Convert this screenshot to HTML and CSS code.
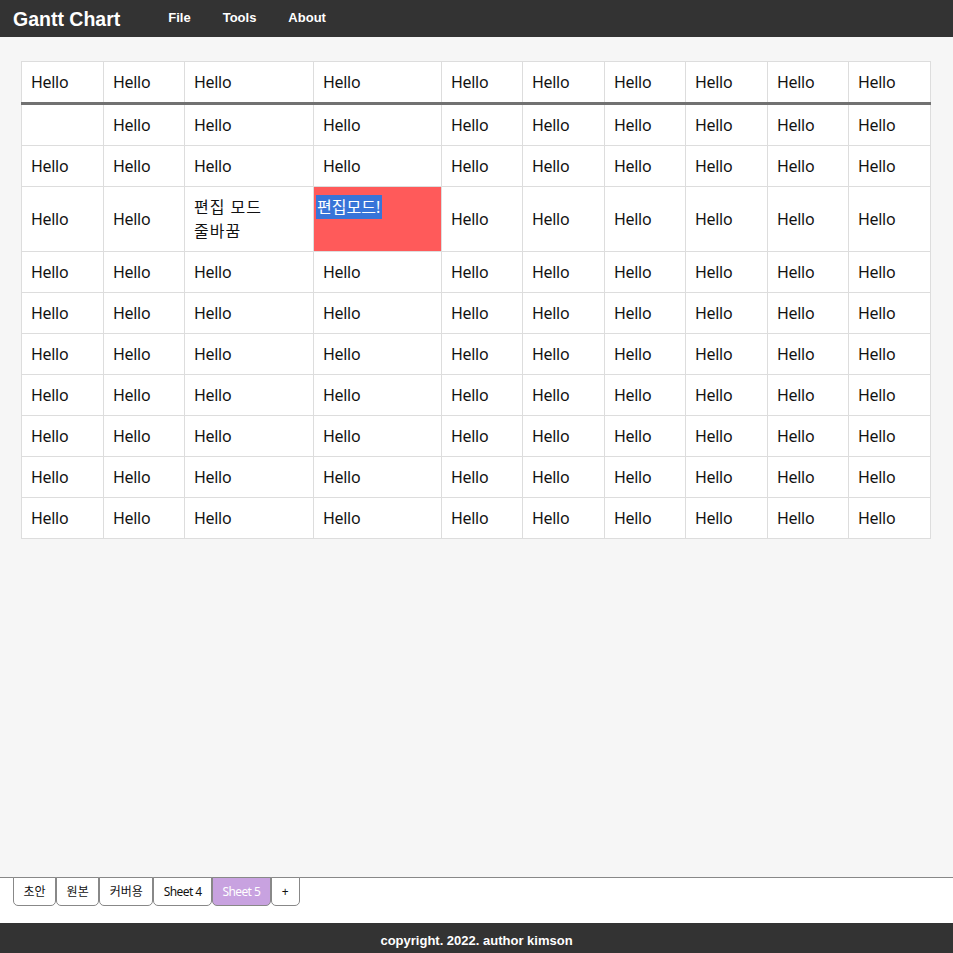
FILE: index.html
```html
<!DOCTYPE html>
<html lang="ko">
<head>
<meta charset="utf-8">
<title>Gantt Chart</title>
<link rel="stylesheet" href="styles.css">
</head>
<body>
<header class="topbar">
  <div class="brand">Gantt Chart</div>
  <nav class="menu">
    <span class="menu-item">File</span>
    <span class="menu-item">Tools</span>
    <span class="menu-item">About</span>
  </nav>
</header>
<main class="content">
  <table class="sheet">
    <colgroup>
      <col class="c82"><col class="c81"><col class="c129"><col class="c128"><col class="c81">
      <col class="c82"><col class="c81"><col class="c82"><col class="c81"><col class="c82">
    </colgroup>
    <thead>
      <tr><th>Hello</th><th>Hello</th><th>Hello</th><th>Hello</th><th>Hello</th><th>Hello</th><th>Hello</th><th>Hello</th><th>Hello</th><th>Hello</th></tr>
    </thead>
    <tbody>
      <tr><td></td><td>Hello</td><td>Hello</td><td>Hello</td><td>Hello</td><td>Hello</td><td>Hello</td><td>Hello</td><td>Hello</td><td>Hello</td></tr>
      <tr><td>Hello</td><td>Hello</td><td>Hello</td><td>Hello</td><td>Hello</td><td>Hello</td><td>Hello</td><td>Hello</td><td>Hello</td><td>Hello</td></tr>
      <tr><td>Hello</td><td>Hello</td><td class="ko">편집 모드<br>줄바꿈</td><td class="editing"><span class="selected">편집모드!</span></td><td>Hello</td><td>Hello</td><td>Hello</td><td>Hello</td><td>Hello</td><td>Hello</td></tr>
      <tr><td>Hello</td><td>Hello</td><td>Hello</td><td>Hello</td><td>Hello</td><td>Hello</td><td>Hello</td><td>Hello</td><td>Hello</td><td>Hello</td></tr>
      <tr><td>Hello</td><td>Hello</td><td>Hello</td><td>Hello</td><td>Hello</td><td>Hello</td><td>Hello</td><td>Hello</td><td>Hello</td><td>Hello</td></tr>
      <tr><td>Hello</td><td>Hello</td><td>Hello</td><td>Hello</td><td>Hello</td><td>Hello</td><td>Hello</td><td>Hello</td><td>Hello</td><td>Hello</td></tr>
      <tr><td>Hello</td><td>Hello</td><td>Hello</td><td>Hello</td><td>Hello</td><td>Hello</td><td>Hello</td><td>Hello</td><td>Hello</td><td>Hello</td></tr>
      <tr><td>Hello</td><td>Hello</td><td>Hello</td><td>Hello</td><td>Hello</td><td>Hello</td><td>Hello</td><td>Hello</td><td>Hello</td><td>Hello</td></tr>
      <tr><td>Hello</td><td>Hello</td><td>Hello</td><td>Hello</td><td>Hello</td><td>Hello</td><td>Hello</td><td>Hello</td><td>Hello</td><td>Hello</td></tr>
      <tr><td>Hello</td><td>Hello</td><td>Hello</td><td>Hello</td><td>Hello</td><td>Hello</td><td>Hello</td><td>Hello</td><td>Hello</td><td>Hello</td></tr>
    </tbody>
  </table>
</main>
<div class="tabbar">
  <button class="tab">초안</button>
  <button class="tab">원본</button>
  <button class="tab">커버용</button>
  <button class="tab tab-latin">Sheet 4</button>
  <button class="tab tab-latin active">Sheet 5</button>
  <button class="tab tab-plus">+</button>
</div>
<footer class="footer">copyright. 2022. author kimson</footer>
</body>
</html>
```

FILE: styles.css
```css
* { box-sizing: border-box; }
html, body { margin: 0; padding: 0; height: 100%; }
body {
  display: flex;
  flex-direction: column;
  background: #f6f6f6;
  font-family: "Noto Sans", "Noto Sans CJK KR", sans-serif;
  color: #111;
}
.topbar {
  height: 37px;
  background: #333;
  color: #fff;
  display: flex;
  align-items: center;
  padding-left: 13px;
  flex: none;
}
.brand {
  font-family: "Liberation Sans", "Noto Sans CJK KR", sans-serif;
  font-weight: bold;
  font-size: 19.5px;
  margin-top: 1px;
}
.menu {
  display: flex;
  margin-left: 32px;
  margin-top: -3px;
}
.menu-item {
  font-family: "Liberation Sans", sans-serif;
  font-weight: bold;
  font-size: 13px;
  padding: 0 16px;
}
.content {
  flex: 1;
  padding: 24px 22px 0 21px;
}
.sheet {
  border-collapse: collapse;
  table-layout: fixed;
  width: 910px;
  background: #fff;
  border: 1px solid #ddd;
}
.c82 { width: 82px; }
.c81 { width: 81px; }
.c129 { width: 129px; }
.c128 { width: 128px; }
.sheet th, .sheet td {
  border: 1px solid #ddd;
  padding: 8px 9px;
  font-size: 16px;
  line-height: 24px;
  font-weight: normal;
  text-align: left;
  vertical-align: middle;
  color: #111;
  white-space: nowrap;
  letter-spacing: -0.3px;
}
.sheet td.ko {
  letter-spacing: 1px;
}
.sheet thead th {
  border-bottom: 3px solid #717171;
}
.sheet td.editing {
  background: #ff5a5a;
  vertical-align: top;
  padding: 8px 2px;
  letter-spacing: 0;
}
.selected {
  background: #3874d8;
  color: #fff;
  display: inline-block;
  line-height: 24px;
  padding: 0 2px 0 1px;
}
.tabbar {
  flex: none;
  height: 46px;
  background: #fff;
  border-top: 1px solid #888;
  display: flex;
  align-items: flex-start;
  padding-left: 13px;
}
.tab {
  height: 29px;
  margin: 0;
  margin-top: -1px;
  padding: 0 9.5px;
  border: 1px solid #888;
  border-radius: 0 0 5px 5px;
  background: #fff;
  color: #111;
  font-family: "Noto Sans", "Noto Sans CJK KR", sans-serif;
  font-size: 12px;
  letter-spacing: 0;
  line-height: 27px;
}
.tab-latin {
  letter-spacing: -0.6px;
}
.tab-plus {
  padding: 0 10px;
}
.tab.active {
  background: #c8a2e0;
  color: #fff;
}
.footer {
  flex: none;
  height: 30px;
  background: #333;
  color: #fff;
  text-align: center;
  font-family: "Liberation Sans", sans-serif;
  font-weight: bold;
  font-size: 13px;
  line-height: 36px;
}
```
